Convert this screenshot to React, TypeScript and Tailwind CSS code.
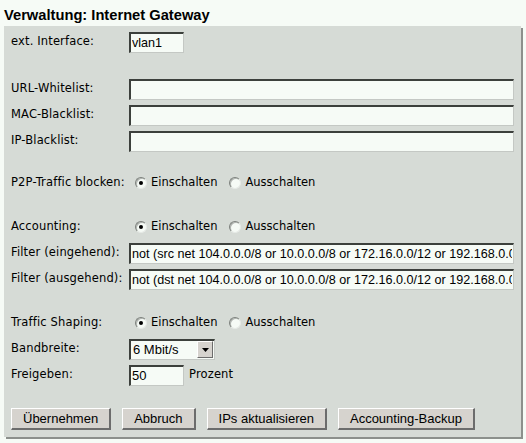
import React from "react";

const label = "w-[118px] shrink-0 text-[11.5px] tracking-[0.15px] text-black [font-family:'DejaVu_Sans',Verdana,sans-serif]";
const inputCls =
  "h-[21px] bg-[#f6fbf6] border-t-2 border-l-2 border-b border-r border-t-[#3c403c] border-l-[#3c403c] border-b-[#c4c8c4] border-r-[#c4c8c4] px-[1px] text-[12.6px] text-black outline-none [font-family:'Liberation_Sans',Arial,sans-serif]";

function Radio({ checked }: { checked?: boolean }) {
  return (
    <span className="w-[12px] h-[12px] rounded-full bg-[#f6fbf6] border border-t-[#7c807c] border-l-[#7c807c] border-b-[#e6eae6] border-r-[#e6eae6] flex items-center justify-center shrink-0 shadow-[inset_1px_1px_0_#b0b4b0]">
      {checked && <span className="w-[4px] h-[4px] rounded-full bg-black" />}
    </span>
  );
}

function RadioGroup() {
  return (
    <div className="flex items-center pl-[6px] text-[11.5px] [font-family:'DejaVu_Sans',Verdana,sans-serif]">
      <Radio checked />
      <span className="ml-[4px]">Einschalten</span>
      <span className="ml-[12px]">
        <Radio />
      </span>
      <span className="ml-[4px]">Ausschalten</span>
    </div>
  );
}

function Row({ children, className = "" }: { children: React.ReactNode; className?: string }) {
  return <div className={"flex items-center h-[26px] " + className}>{children}</div>;
}

function Btn({ children }: { children: React.ReactNode }) {
  return (
    <button className="h-[22px] px-[11px] bg-[#d6d3ce] border-t border-l border-b-2 border-r-2 border-t-white border-l-white border-b-[#6c6c6c] border-r-[#6c6c6c] text-[13px] text-black leading-none [font-family:'Liberation_Sans',Arial,sans-serif]">
      {children}
    </button>
  );
}

export default function App() {
  return (
    <div className="w-[526px] h-[443px] bg-[#f6fbf6] overflow-hidden">
      <div className="h-[26px] pl-[4px] pt-[6px] text-[14.7px] font-bold leading-[18px] text-black [font-family:'Liberation_Sans',Arial,sans-serif]">
        Verwaltung: Internet Gateway
      </div>
      <div className="ml-[4px] w-[517px] bg-[#d6dbd6] shadow-[2px_2px_0_#8c908c] pl-[7px] pr-[7px] pt-[3px] pb-[5px]">
        <Row>
          <span className={label}>ext. Interface:</span>
          <input className={inputCls + " w-[55px]"} defaultValue="vlan1" />
        </Row>
        <Row className="mt-[21px]">
          <span className={label}>URL-Whitelist:</span>
          <input className={inputCls + " w-[385px]"} defaultValue="" />
        </Row>
        <Row>
          <span className={label}>MAC-Blacklist:</span>
          <input className={inputCls + " w-[385px]"} defaultValue="" />
        </Row>
        <Row>
          <span className={label}>IP-Blacklist:</span>
          <input className={inputCls + " w-[385px]"} defaultValue="" />
        </Row>
        <Row className="mt-[16px]">
          <span className={label}>P2P-Traffic blocken:</span>
          <RadioGroup />
        </Row>
        <Row className="mt-[18px]">
          <span className={label}>Accounting:</span>
          <RadioGroup />
        </Row>
        <Row>
          <span className={label}>Filter (eingehend):</span>
          <input
            className={inputCls + " w-[385px]"}
            defaultValue="not (src net 104.0.0.0/8 or 10.0.0.0/8 or 172.16.0.0/12 or 192.168.0.0/16)"
          />
        </Row>
        <Row>
          <span className={label}>Filter (ausgehend):</span>
          <input
            className={inputCls + " w-[385px]"}
            defaultValue="not (dst net 104.0.0.0/8 or 10.0.0.0/8 or 172.16.0.0/12 or 192.168.0.0/16)"
          />
        </Row>
        <Row className="mt-[18px]">
          <span className={label}>Traffic Shaping:</span>
          <RadioGroup />
        </Row>
        <Row>
          <span className={label}>Bandbreite:</span>
          <div className="h-[21px] w-[86px] bg-[#f6fbf6] border-t-2 border-l-2 border-b border-r border-t-[#3c403c] border-l-[#3c403c] border-b-[#c4c8c4] border-r-[#c4c8c4] flex items-center">
            <span className="flex-1 pl-[2px] text-[13px] text-black [font-family:'Liberation_Sans',Arial,sans-serif]">6 Mbit/s</span>
            <span className="w-[16px] h-[17px] mr-[1px] bg-[#d6d3ce] border-t border-l border-b border-r border-t-white border-l-white border-b-[#6c6c6c] border-r-[#6c6c6c] flex items-center justify-center">
              <svg width="7" height="4" viewBox="0 0 7 4">
                <path d="M0 0h7L3.5 4z" fill="#000" />
              </svg>
            </span>
          </div>
        </Row>
        <Row>
          <span className={label}>Freigeben:</span>
          <input className={inputCls + " w-[55px] text-[13px]"} defaultValue="50" />
          <span className="ml-[5px] text-[11.5px] tracking-[0.15px] [font-family:'DejaVu_Sans',Verdana,sans-serif]">Prozent</span>
        </Row>
        <Row className="mt-[18px] gap-[11px]">
          <Btn>Übernehmen</Btn>
          <Btn>Abbruch</Btn>
          <Btn>IPs aktualisieren</Btn>
          <Btn>Accounting-Backup</Btn>
        </Row>
      </div>
    </div>
  );
}
